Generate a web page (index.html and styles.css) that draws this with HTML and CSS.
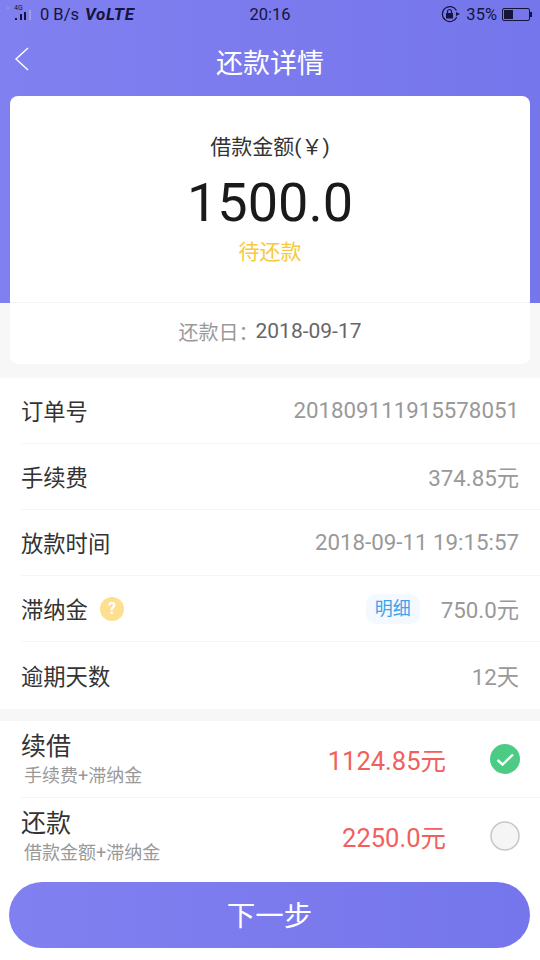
FILE: index.html
```html
<!DOCTYPE html>
<html lang="zh-CN">
<head>
    <meta charset="UTF-8">
    <meta name="viewport" content="width=device-width, initial-scale=1.0">
    <title>还款详情</title>
    <link rel="stylesheet" href="styles.css">
</head>
<body>
    <div class="top">
        <div class="hero">
            <div class="status-bar">
                <div class="status-left">
                    <svg class="signal" width="32" height="20" viewBox="0 0 32 20">
                        <text x="8" y="6" class="signal-text">4G</text>
                        <circle cx="2" cy="4" r="1" fill="#a0a0d8"/>
                        <rect x="9" y="14" width="2" height="2" fill="#14143c"/>
                        <rect x="14" y="10" width="2" height="6" fill="#14143c"/>
                        <rect x="18" y="8" width="2" height="8" fill="#14143c"/>
                        <rect x="23" y="6" width="2" height="10" fill="#a0a0d8"/>
                    </svg>
                    <span class="speed">0 B/s</span>
                    <span class="volte">VoLTE</span>
                </div>
                <div class="status-time">20:16</div>
                <div class="status-right">
                    <svg width="20" height="18" viewBox="0 0 20 18">
                        <path d="M15.5 5.5A7.5 7.5 0 1 0 15.8 12" fill="none" stroke="#14143c" stroke-width="1.2"/>
                        <path d="M15 7l4 2-4 2z" fill="#14143c"/>
                        <rect x="5" y="8" width="7" height="5.5" rx="0.5" fill="#14143c"/>
                        <path d="M6.5 8V6.5a2 2 0 0 1 4 0V8" fill="none" stroke="#14143c" stroke-width="1.2"/>
                    </svg>
                    <span class="battery-text">35%</span>
                    <div class="battery"><div class="battery-level"></div></div>
                    <div class="battery-tip"></div>
                </div>
            </div>
            <div class="title-bar">
                <svg class="back" width="16" height="26" viewBox="0 0 16 26">
                    <path d="M15 2L3 13l12 11" fill="none" stroke="#fff" stroke-width="1.4"/>
                </svg>
                <h1>还款详情</h1>
            </div>
            <div class="summary-card">
                <div class="summary-main">
                    <div class="summary-label">借款金额(￥)</div>
                    <div class="summary-amount">1500.0</div>
                    <div class="summary-state">待还款</div>
                </div>
                <div class="summary-date"><span>还款日：</span><b>2018-09-17</b></div>
            </div>
        </div>
    </div>

    <div class="detail-list">
        <div class="row"><span class="row-name">订单号</span><span class="row-value">201809111915578051</span></div>
        <div class="row"><span class="row-name">手续费</span><span class="row-value">374.85元</span></div>
        <div class="row"><span class="row-name">放款时间</span><span class="row-value">2018-09-11 19:15:57</span></div>
        <div class="row">
            <span class="row-name">滞纳金</span>
            <span class="help">?</span>
            <span class="detail-tag">明细</span>
            <span class="row-value">750.0元</span>
        </div>
        <div class="row"><span class="row-name">逾期天数</span><span class="row-value">12天</span></div>
    </div>

    <div class="options">
        <div class="option">
            <div class="option-text">
                <div class="option-name">续借</div>
                <div class="option-note">手续费+滞纳金</div>
            </div>
            <div class="option-amount">1124.85元</div>
            <svg class="radio" width="30" height="30" viewBox="0 0 30 30">
                <circle cx="15" cy="15" r="15" fill="#4ccb85"/>
                <path d="M7.5 16l5 4.5 10.5-10" fill="none" stroke="#fff" stroke-width="2.4"/>
            </svg>
        </div>
        <div class="option">
            <div class="option-text">
                <div class="option-name">还款</div>
                <div class="option-note">借款金额+滞纳金</div>
            </div>
            <div class="option-amount">2250.0元</div>
            <svg class="radio" width="30" height="30" viewBox="0 0 30 30">
                <circle cx="15" cy="15" r="14" fill="#f5f5f5" stroke="#c8c8c8" stroke-width="1.5"/>
            </svg>
        </div>
    </div>

    <button class="next-btn">下一步</button>
</body>
</html>
```

FILE: styles.css
```css
* {
    margin: 0;
    padding: 0;
    box-sizing: border-box;
    font-family: Roboto, "Noto Sans CJK SC", sans-serif;
}

body {
    width: 540px;
    height: 960px;
    overflow: hidden;
    background: #fff;
}

.top {
    height: 378px;
    background: #f7f7f7;
}

.hero {
    height: 303px;
    background: linear-gradient(90deg, #8080f0, #7676ec);
}

.status-bar {
    height: 28px;
    display: grid;
    grid-template-columns: 1fr auto 1fr;
    align-items: center;
    padding: 0 6px;
    color: #14143c;
    font-size: 16.5px;
}

.status-left {
    display: flex;
    align-items: center;
}

.signal-text {
    font-size: 7px;
    fill: #14143c;
}

.speed {
    margin-left: 2px;
}

.volte {
    margin-left: 6px;
    font-size: 17px;
    font-weight: bold;
    font-style: italic;
    letter-spacing: 0.7px;
}

.status-right {
    display: flex;
    align-items: center;
    justify-content: flex-end;
    margin-right: 2px;
}

.battery-text {
    margin-left: 5px;
}

.battery {
    width: 28px;
    height: 13px;
    margin-left: 5px;
    padding: 1px;
    border: 1px solid #14143c;
    border-radius: 2px;
}

.battery-level {
    width: 9px;
    height: 100%;
    background: #14143c;
}

.battery-tip {
    width: 2px;
    height: 5px;
    background: #14143c;
}

.title-bar {
    height: 66px;
    margin-bottom: 2px;
    display: flex;
    align-items: center;
    justify-content: center;
    position: relative;
}

.back {
    position: absolute;
    left: 13px;
    top: 18px;
}

h1 {
    color: #fff;
    font-size: 27px;
    font-weight: 400;
}

.summary-card {
    width: 520px;
    height: 268px;
    margin: 0 10px;
    background: #fff;
    border-radius: 8px;
}

.summary-main {
    height: 207px;
    padding-top: 37px;
    text-align: center;
    border-bottom: 1px solid #f3f3f3;
}

.summary-label {
    height: 28px;
    line-height: 28px;
    color: #333;
    font-size: 21px;
}

.summary-amount {
    height: 62px;
    line-height: 62px;
    margin-top: 11px;
    color: #1a1a1a;
    font-size: 54px;
}

.summary-state {
    height: 32px;
    line-height: 32px;
    margin-top: 2px;
    color: #f7c93c;
    font-size: 21px;
}

.summary-date {
    height: 56px;
    display: flex;
    align-items: center;
    justify-content: center;
}

.summary-date span {
    margin-right: -3px;
    color: #999;
    font-size: 20px;
}

.summary-date b {
    color: #666;
    font-size: 21px;
    font-weight: 400;
}

.row {
    height: 66px;
    margin-left: 21px;
    padding: 0 21px 2px 0;
    display: flex;
    align-items: center;
    border-bottom: 1px solid #f5f5f5;
}

.row:last-child {
    height: 67px;
    border-bottom: 0;
}

.row-name {
    color: #333;
    font-size: 22.3px;
}

.row-value {
    margin-left: auto;
    color: #999;
    font-size: 22.3px;
}

.help {
    width: 24px;
    height: 24px;
    margin: 3px 0 0 12px;
    border-radius: 50%;
    background: #fde08f;
    color: #fff;
    font-size: 16px;
    font-weight: bold;
    line-height: 24px;
    text-align: center;
}

.detail-tag {
    width: 54px;
    height: 30px;
    margin: 3px 0 0 auto;
    border-radius: 10px;
    background: #f3f9fe;
    color: #3fa2ea;
    font-size: 18px;
    line-height: 30px;
    text-align: center;
}

.detail-tag + .row-value {
    margin-left: 21px;
}

.options {
    border-top: 12px solid #f7f7f7;
}

.option {
    height: 76px;
    margin-left: 21px;
    padding-right: 20px;
    display: flex;
    align-items: center;
    border-bottom: 1px solid #f5f5f5;
}

.option:first-child {
    height: 77px;
}

.option:last-child {
    border-bottom: 0;
}

.option-text {
    padding-top: 2px;
}

.option-name {
    color: #333;
    font-size: 25px;
    line-height: 30px;
}

.option-note {
    margin: 2px 0 0 3px;
    color: #999;
    font-size: 18px;
    line-height: 24px;
}

.option-amount {
    margin: -2px 44px 0 auto;
    color: #f25f5c;
    font-size: 25.5px;
}

.next-btn {
    display: block;
    width: 521px;
    height: 66px;
    margin: 8px 0 0 9px;
    padding-bottom: 4px;
    border: none;
    border-radius: 33px;
    background: linear-gradient(90deg, #8080f0, #7676ec);
    color: #fff;
    font-size: 28.5px;
}
```
